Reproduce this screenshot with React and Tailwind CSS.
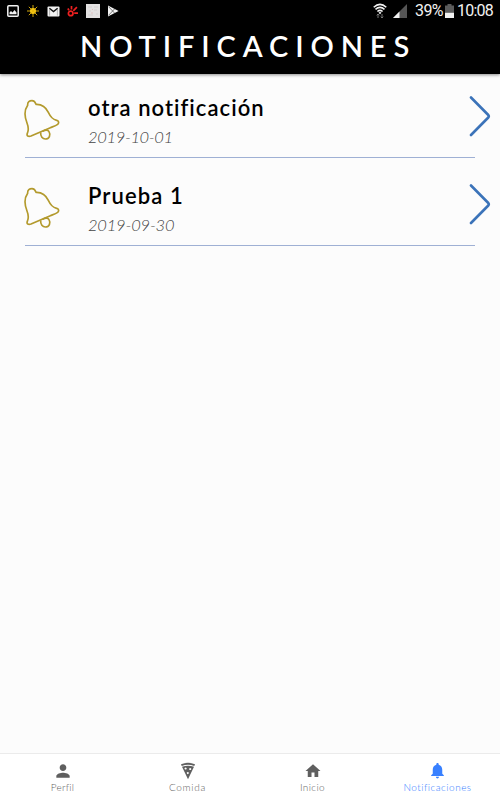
import React from "react";
import { MdPerson, MdHome, MdNotifications } from "react-icons/md";

const notifications = [
  { id: 1, title: "otra notificación", date: "2019-10-01", titleClass: "tracking-[1.05px]", dateClass: "tracking-[-0.35px]" },
  { id: 2, title: "Prueba 1", date: "2019-09-30", titleClass: "tracking-[1.1px]", dateClass: "tracking-[-0.2px]" },
];

const StatusBar = () => (
  <div className="flex h-[22px] items-center justify-between pl-[7px] pr-[8px]">
    <div className="flex items-center">
      {/* Gallery */}
      <svg className="mr-[8px]" width="12" height="12" viewBox="0 0 12 12" fill="none">
        <rect x="0.8" y="0.8" width="10.4" height="10.4" rx="1" stroke="#f2f2f2" strokeWidth="1.5" />
        <path d="M2.5 9.3V7.5L4 6l1.5 1.5L7.5 5l2 2.5v1.8z" fill="#f2f2f2" />
      </svg>
      {/* Weather */}
      <svg className="mr-[8px]" width="12" height="12" viewBox="0 0 12 12">
        <circle cx="6" cy="6" r="3" fill="#ffd21a" />
        <path d="M6 0v12M0 6h12M1.8 1.8l8.4 8.4M10.2 1.8l-8.4 8.4" stroke="#e8b80c" strokeWidth="0.9" />
      </svg>
      {/* Mail */}
      <svg className="mr-[7px]" width="13" height="11" viewBox="0 0 13 11">
        <rect x="0.5" y="0.5" width="12" height="10" rx="1" fill="#f2f2f2" />
        <path d="M2.4 2.2l4.1 3.4 4.1-3.4" fill="none" stroke="#111" strokeWidth="1.4" />
        <path d="M2.6 3v6.6M10.4 3v6.6" stroke="#888" strokeWidth="0.6" />
      </svg>
      {/* Carrier */}
      <svg className="mr-[7px]" width="12" height="12" viewBox="0 0 12 12" fill="none" stroke="#ee2020" strokeWidth="1.7">
        <circle cx="3.7" cy="8.4" r="2.3" />
        <path d="M4.5 4.5V1M6.3 5.8l3.6-3.6M7.2 8.2h3.8M2 5.2L.8 3.6" />
      </svg>
      <svg className="mr-[7px]" width="14" height="14" viewBox="0 0 14 14">
        <rect width="14" height="14" fill="#e3e1e1" />
        <path d="M2 3h4M8 3h4M3 7h2M8 6h3M2 11h5M10 10h2" stroke="#cfcaca" strokeWidth="0.8" />
        <path d="M6 5l1 1M5 9h2" stroke="#deb8b8" strokeWidth="0.8" />
      </svg>
      {/* Play store */}
      <svg width="12" height="12" viewBox="0 0 12 12">
        <path d="M1 0.5L11.6 6L1 11.5z" fill="#f2f2f2" />
        <path d="M1.5 1.6L7.5 8M1.5 10.4L7.5 4" stroke="#444" strokeWidth="0.7" />
      </svg>
    </div>
    <div className="flex items-center font-['Roboto',sans-serif] text-[16px] leading-none text-[#f2f2f2]">
      <svg className="mr-[6px]" width="14" height="16" viewBox="0 0 14 16" fill="none" stroke="#f2f2f2">
        <path d="M.7 4.2Q7-1.5 13.3 4.2M2.5 6.4q4.5-4 9 0M4.4 8.5q2.6-2.3 5.2 0" strokeWidth="1.5" />
        <path d="M7 8.8l1.5 1L7 11.3 5.5 9.8z" fill="#f2f2f2" stroke="none" />
        <path d="M5 15v-4M3.7 12.3L5 11l1.3 1.3M9 11v4M7.7 13.7L9 15l1.3-1.3" stroke="#777" />
      </svg>
      <svg className="mr-[8px]" width="14" height="14" viewBox="0 0 14 14">
        <path d="M14 0v14H0z" fill="#555" />
        <path d="M6.5 7.5V14H0z" fill="#f2f2f2" />
      </svg>
      <span className="w-[27px] whitespace-nowrap tracking-[-0.6px]">39%</span>
      <svg className="ml-[3px] mr-[3px]" width="9" height="14" viewBox="0 0 9 14">
        <path d="M2.5 0h4v1.5H9V14H0V1.5h2.5z" fill="#5b5b5b" />
        <path d="M0 8.8h9V14H0z" fill="#f2f2f2" />
      </svg>
      <span className="w-[35px] whitespace-nowrap tracking-[-0.8px]">10:08</span>
    </div>
  </div>
);

const BellOutline = () => (
  <svg className="mt-[1px] shrink-0" width="39" height="44" viewBox="21 21 117 132" fill="none" stroke="#b39a2d" strokeWidth="5" strokeLinejoin="round">
    <path d="M38 46C37 35 44 32 51 32C58 32 61 37 63 43C83 42 93 52 100 67C108 84 114 88 125 91C131 93 133 98 128 103C121 108 113 110 106 113L48 138C40 141 34 138 37 130C42 119 40 109 36 99C28 79 28 60 38 46Z" />
    <path d="M77 127C76 140 83 147 91 147C103 147 108 135 102 125C99 119 91 119 83 124" />
  </svg>
);

const NotificationItem = ({ title, date, titleClass, dateClass }) => (
  <li className="ml-[25px] mr-[25px] flex h-[88px] items-start border-b border-[#9fb0d4] pt-[25px]">
    <div className="-ml-[3px] mt-[1px] w-[66px] shrink-0">
      <BellOutline />
    </div>
    <div className="min-w-0 flex-1">
      <p className={`whitespace-nowrap text-[22px] font-semibold leading-[26px] text-black ${titleClass}`}>{title}</p>
      <p className={`mt-[5px] whitespace-nowrap text-[16.5px] font-light italic leading-[22px] text-[#444] ${dateClass}`}>{date}</p>
    </div>
    <svg className="-mr-[16px] mt-px shrink-0" width="24" height="42" viewBox="0 0 24 42" fill="none">
      <path d="M4 1.5L21.3 19Q22.3 20.2 21.3 21.5L4 39" stroke="#3b73b9" strokeWidth="2.6" strokeLinecap="round" strokeLinejoin="round" />
    </svg>
  </li>
);

const Tab = ({ label, labelClass, active, children }) => (
  <button className={`flex flex-1 flex-col items-center pt-[7px] ${active ? "text-[#3880ff]" : "text-[#5f5f5f]"}`}>
    {children}
    <span className={`-mt-px whitespace-nowrap text-[10px] font-light leading-[14px] ${labelClass}`}>{label}</span>
  </button>
);

function App() {
  return (
    <div className="flex h-screen w-full flex-col overflow-hidden bg-[#fcfcfc] font-['Lato',sans-serif]">
      <header className="relative h-[74px] shrink-0 bg-black shadow-[0_1px_3px_rgba(0,0,0,0.45)]">
        <StatusBar />
        <h1 className="ml-[80px] mt-[6px] whitespace-nowrap text-[29px] font-semibold leading-[36px] tracking-[6.9px] text-white">
          NOTIFICACIONES
        </h1>
      </header>

      <ul className="flex-1 -mt-[4px]">
        {notifications.map((item) => (
          <NotificationItem key={item.id} {...item} />
        ))}
      </ul>

      <nav className="flex h-[47px] shrink-0 border-t border-[#ebebeb] bg-white">
        <Tab label="Perfil" labelClass="tracking-[0.2px]">
          <MdPerson size={20} />
        </Tab>
        <Tab label="Comida" labelClass="tracking-[0.7px]">
          <svg width="20" height="20" viewBox="0 0 20 20" fill="currentColor">
            <path d="M3 3.3Q10 .3 17 3.3L16.3 5Q10 2.6 3.7 5z" />
            <path fillRule="evenodd" d="M4 5.8Q10 3.6 16 5.8L10 18.3zM7.6 6.4a1.1 1.1 0 1 0 .01 0zM12.2 6.9a1.1 1.1 0 1 0 .01 0zM9.8 11a1 1 0 1 0 .01 0z" />
          </svg>
        </Tab>
        <Tab label="Inicio" labelClass="tracking-[0.4px]">
          <MdHome size={18} className="my-px" />
        </Tab>
        <Tab label="Notificaciones" labelClass="tracking-[0.5px]" active>
          <MdNotifications size={19} className="mb-px" />
        </Tab>
      </nav>
    </div>
  );
}

export default App;
